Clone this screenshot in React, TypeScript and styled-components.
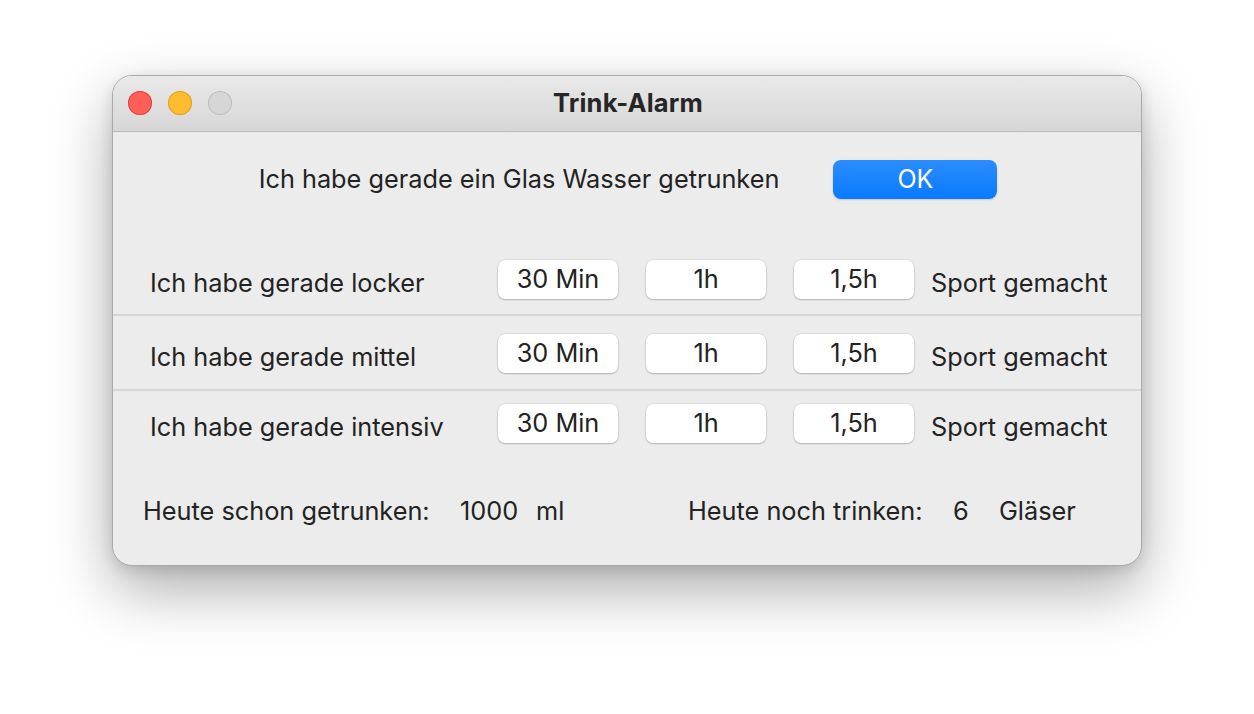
import React from "react";
import styled, { createGlobalStyle } from "styled-components";

const Global = createGlobalStyle`
  html, body { margin: 0; padding: 0; background: #ffffff; }
  body { font-family: Inter, "Noto Sans", "Liberation Sans", sans-serif; }
  #root { width: 1254px; height: 714px; }
`;

const Page = styled.div`
  width: 1254px;
  height: 714px;
  padding: 75px 0 0 112px;
  box-sizing: border-box;
`;

const Window = styled.div`
  width: 1030px;
  height: 491px;
  box-sizing: border-box;
  background: #ececec;
  border-radius: 20px;
  border: 1px solid #a9a9a9;
  box-shadow: 0 24px 60px rgba(0, 0, 0, 0.32), 0 4px 14px rgba(0, 0, 0, 0.12);
  overflow: hidden;
  display: flex;
  flex-direction: column;
  color: #232323;
`;

const TitleBar = styled.div`
  height: 55px;
  flex: none;
  position: relative;
  display: flex;
  align-items: center;
  justify-content: center;
  background: linear-gradient(#e9e9e9, #d7d7d7);
  border-bottom: 1px solid #b9b9b9;
`;

const Lights = styled.div`
  position: absolute;
  left: 15px;
  top: 15px;
  display: flex;
  gap: 16px;
`;

const Light = styled.div<{ $c: string; $b: string }>`
  width: 24px;
  height: 24px;
  border-radius: 50%;
  background: ${(p) => p.$c};
  box-shadow: inset 0 0 0 1px ${(p) => p.$b};
`;

const Title = styled.div`
  font-size: 25.5px;
  font-weight: 700;
  color: #262626;
  padding-left: 2px;
  padding-bottom: 2px;
  letter-spacing: 0.2px;
`;

const Content = styled.div`
  flex: 1;
  display: flex;
  flex-direction: column;
`;

const TopRow = styled.div`
  margin-top: 28px;
  display: flex;
  align-items: center;
  justify-content: center;
  gap: 54px;
  padding-left: 2px;
`;

const Text = styled.span`
  font-size: 25.3px;
  white-space: nowrap;
  padding-bottom: 2px;
`;

const OkButton = styled.button`
  width: 164px;
  height: 39px;
  border: none;
  border-radius: 8px;
  background: linear-gradient(#2b8dff, #0a7aff);
  color: #ffffff;
  font-family: inherit;
  font-size: 25px;
  box-shadow: 0 1px 2px rgba(0, 0, 0, 0.15);
  padding: 0 0 2px;
`;

const Rows = styled.div`
  margin-top: 61px;
  display: flex;
  flex-direction: column;
`;

const Row = styled.div<{ $pt: number; $pb: number; $line?: boolean }>`
  display: flex;
  align-items: center;
  padding: ${(p) => p.$pt}px 0 ${(p) => p.$pb}px 37px;
  border-bottom: ${(p) => (p.$line ? "2px solid #d6d6d6" : "none")};
`;

const RowLabel = styled.span`
  width: 348px;
  flex: none;
  font-size: 25.3px;
  padding-top: 5px;
  white-space: nowrap;
`;

const Buttons = styled.div`
  display: flex;
  gap: 28px;
`;

const TimeButton = styled.button`
  width: 120px;
  height: 39px;
  border: none;
  border-radius: 7px;
  background: #ffffff;
  color: #232323;
  font-family: inherit;
  font-size: 25.3px;
  padding: 0 0 2px;
  box-shadow: 0 0 0 0.5px rgba(0, 0, 0, 0.12), 0 1px 2px rgba(0, 0, 0, 0.2);
`;

const Suffix = styled.span`
  margin-left: 17px;
  font-size: 25.3px;
  padding-top: 5px;
  white-space: nowrap;
`;

const Footer = styled.div`
  margin-top: 52px;
  display: grid;
  grid-template-columns: 317px 76px 152px 265px 46px auto;
  padding-left: 30px;
  font-size: 25.3px;
  white-space: nowrap;
`;

const rows = [
  { label: "Ich habe gerade locker", pt: 0, pb: 15, line: true },
  { label: "Ich habe gerade mittel", pt: 18, pb: 16, line: true },
  { label: "Ich habe gerade intensiv", pt: 13, pb: 0, line: false },
];

export default function App() {
  return (
    <>
      <Global />
      <Page>
        <Window>
          <TitleBar>
            <Lights>
              <Light $c="#ff5f57" $b="#e0443e" />
              <Light $c="#febc2e" $b="#dea123" />
              <Light $c="#d6d6d6" $b="#bdbdbd" />
            </Lights>
            <Title>Trink-Alarm</Title>
          </TitleBar>
          <Content>
            <TopRow>
              <Text>Ich habe gerade ein Glas Wasser getrunken</Text>
              <OkButton>OK</OkButton>
            </TopRow>
            <Rows>
              {rows.map((r) => (
                <Row key={r.label} $pt={r.pt} $pb={r.pb} $line={r.line}>
                  <RowLabel>{r.label}</RowLabel>
                  <Buttons>
                    <TimeButton>30 Min</TimeButton>
                    <TimeButton>1h</TimeButton>
                    <TimeButton>1,5h</TimeButton>
                  </Buttons>
                  <Suffix>Sport gemacht</Suffix>
                </Row>
              ))}
            </Rows>
            <Footer>
              <span>Heute schon getrunken:</span>
              <span>1000</span>
              <span>ml</span>
              <span>Heute noch trinken:</span>
              <span>6</span>
              <span>Gläser</span>
            </Footer>
          </Content>
        </Window>
      </Page>
    </>
  );
}
